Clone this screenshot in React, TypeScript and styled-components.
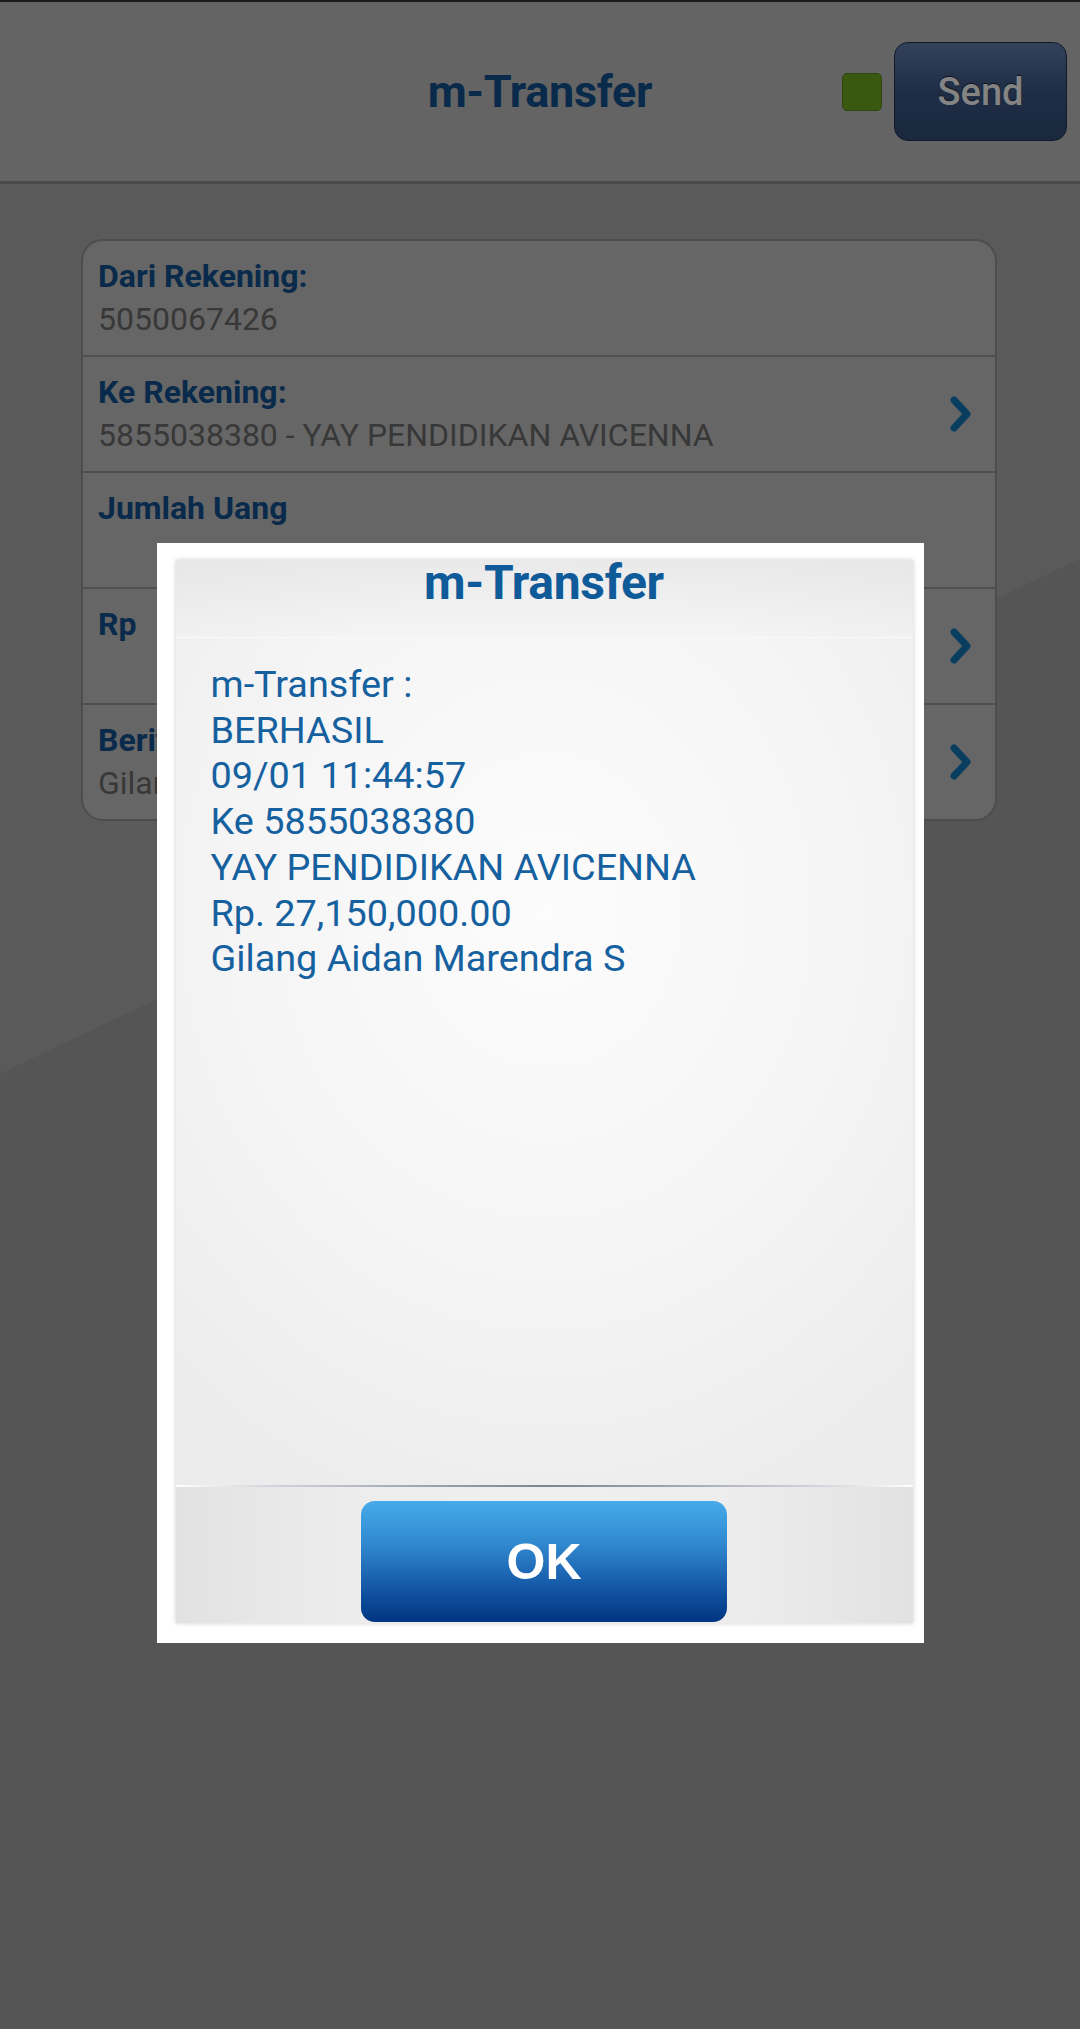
import React from "react";
import styled, { createGlobalStyle } from "styled-components";

const GlobalStyle = createGlobalStyle`
  html, body {
    margin: 0;
    padding: 0;
    background: #555555;
  }
  body {
    font-family: Roboto, "Noto Sans", "DejaVu Sans", sans-serif;
  }
  * { box-sizing: border-box; }
`;

const Screen = styled.div`
  width: 1080px;
  min-height: 2029px;
  display: flex;
  flex-direction: column;
`;

const TopBar = styled.header`
  height: 184px;
  display: grid;
  grid-template-columns: 1fr auto 1fr;
  align-items: center;
  background: #646464;
  border-top: 2px solid #1c1c1c;
  border-bottom: 3px solid #4a4a4a;
`;

const TopTitle = styled.h1`
  grid-column: 2;
  margin: 0;
  font-size: 45px;
  font-weight: 700;
  color: #092a4a;
  letter-spacing: -0.3px;
`;

const TopActions = styled.div`
  grid-column: 3;
  justify-self: end;
  display: flex;
  align-items: center;
  gap: 12px;
  padding-right: 13px;
`;

const StatusLed = styled.span`
  width: 40px;
  height: 38px;
  border-radius: 5px;
  background: #3b5810;
  border: 1px solid #2e450c;
`;

const SendButton = styled.button`
  width: 173px;
  height: 99px;
  border-radius: 14px;
  border: 1px solid #111a28;
  background: linear-gradient(#33425a, #1f2e45 50%, #1a283e);
  color: #848484;
  font-family: Roboto, "Noto Sans", sans-serif;
  font-size: 38px;
  font-weight: 500;
  text-shadow: 0 -1px 1px #0f1520;
  padding: 0;
`;

const Content = styled.main`
  flex: 1;
  padding: 55px 83px 0 81px;
  background: linear-gradient(154.5deg, #5a5a5a 37.7%, #555555 37.7%);
`;

const Card = styled.section`
  border: 2px solid #4d4d4d;
  border-radius: 22px;
  background: #666666;
  overflow: hidden;
`;

const Row = styled.div<{ $first?: boolean }>`
  display: flex;
  align-items: center;
  padding: 14px 21px 14px 15px;
  border-top: ${(p) => (p.$first ? "none" : "2px solid #4f4f4f")};
`;

const RowText = styled.div`
  flex: 1;
  display: flex;
  flex-direction: column;
`;

const RowLabel = styled.span`
  font-size: 32px;
  font-weight: 700;
  line-height: 43px;
  height: 43px;
  color: #092a4a;
`;

const RowValue = styled.span`
  font-size: 32px;
  font-weight: 400;
  line-height: 43px;
  height: 43px;
  color: #383838;
  white-space: nowrap;
`;

const Chevron = () => (
  <svg width="26" height="38" viewBox="0 0 26 38">
    <path
      d="M6 5 L19 19 L6 33"
      fill="none"
      stroke="#0a3e60"
      strokeWidth="7"
      strokeLinecap="round"
      strokeLinejoin="round"
    />
  </svg>
);

const Overlay = styled.div`
  position: fixed;
  inset: 0;
  display: flex;
  justify-content: center;
  align-items: flex-start;
  padding-top: 543px;
`;

const Dialog = styled.div`
  width: 767px;
  height: 1100px;
  background: #ffffff;
  padding: 17px 11px 20px 19px;
`;

const Panel = styled.div`
  height: 100%;
  display: flex;
  flex-direction: column;
  background: radial-gradient(ellipse 75% 60% at 50% 33%, #fcfcfc 0%, #f5f5f5 55%, #ececec 100%);
  box-shadow: 0 0 5px rgba(0, 0, 0, 0.2);
`;

const DialogHeader = styled.div`
  height: 78px;
  text-align: center;
  background: linear-gradient(rgba(225, 225, 225, 0.55), rgba(240, 240, 240, 0.25));
  border-bottom: 1px solid rgba(255, 255, 255, 0.7);
`;

const DialogTitle = styled.h2`
  margin: 0;
  font-size: 48px;
  font-weight: 700;
  line-height: 46px;
  color: #0f5a98;
  letter-spacing: -0.3px;
`;

const Message = styled.div`
  flex: 1;
  padding: 24px 20px 0 35px;
  font-size: 37.8px;
  line-height: 45.7px;
  color: #15609f;
`;

const MessageLine = styled.div`
  white-space: nowrap;
`;

const Separator = styled.div`
  height: 2px;
  background: linear-gradient(
    to right,
    #ffffff 0%,
    #d4d7dd 12%,
    #9aa1ad 35%,
    #7c8594 50%,
    #9aa1ad 65%,
    #d4d7dd 88%,
    #ffffff 100%
  );
`;

const Footer = styled.div`
  height: 136px;
  display: flex;
  justify-content: center;
  padding: 14px 0 1px;
  background: linear-gradient(to right, #e2e2e2, #ededed 25%, #efefef 50%, #ededed 75%, #e2e2e2);
`;

const OkButton = styled.button`
  width: 366px;
  height: 121px;
  border: none;
  border-radius: 14px;
  background: linear-gradient(#46abea 0%, #3189d0 35%, #1559a8 70%, #003580 100%);
  color: #ffffff;
  font-family: "Liberation Sans", Arial, sans-serif;
  font-size: 50px;
  font-weight: 700;
  padding: 0;
`;

const rows = [
  { label: "Dari Rekening:", value: "5050067426", arrow: false },
  { label: "Ke Rekening:", value: "5855038380 - YAY PENDIDIKAN AVICENNA", arrow: true },
  { label: "Jumlah Uang", value: "", arrow: false },
  { label: "Rp", value: "", arrow: true },
  { label: "Berita:", value: "Gilang", arrow: true },
];

const message = [
  "m-Transfer :",
  "BERHASIL",
  "09/01 11:44:57",
  "Ke 5855038380",
  "YAY PENDIDIKAN AVICENNA",
  "Rp. 27,150,000.00",
  "Gilang Aidan Marendra S",
];

export default function App() {
  return (
    <>
      <GlobalStyle />
      <Screen>
        <TopBar>
          <TopTitle>m-Transfer</TopTitle>
          <TopActions>
            <StatusLed />
            <SendButton>Send</SendButton>
          </TopActions>
        </TopBar>
        <Content>
          <Card>
            {rows.map((r, i) => (
              <Row key={r.label} $first={i === 0}>
                <RowText>
                  <RowLabel>{r.label}</RowLabel>
                  <RowValue>{r.value}</RowValue>
                </RowText>
                {r.arrow && <Chevron />}
              </Row>
            ))}
          </Card>
        </Content>
      </Screen>
      <Overlay>
        <Dialog>
          <Panel>
            <DialogHeader>
              <DialogTitle>m-Transfer</DialogTitle>
            </DialogHeader>
            <Message>
              {message.map((m) => (
                <MessageLine key={m}>{m}</MessageLine>
              ))}
            </Message>
            <Separator />
            <Footer>
              <OkButton>OK</OkButton>
            </Footer>
          </Panel>
        </Dialog>
      </Overlay>
    </>
  );
}
